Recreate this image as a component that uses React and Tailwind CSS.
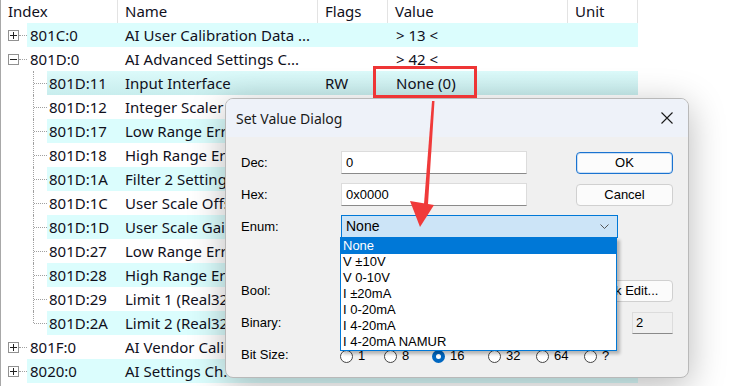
import React from 'react'

const rows = [
  { lvl: 0, sign: '+', idx: '801C:0', name: 'AI User Calibration Data ...', value: '> 13 <' },
  { lvl: 0, sign: '-', idx: '801D:0', name: 'AI Advanced Settings C...', value: '> 42 <' },
  { lvl: 1, idx: '801D:11', name: 'Input Interface', flags: 'RW', value: 'None (0)', sel: true },
  { lvl: 1, idx: '801D:12', name: 'Integer Scaler' },
  { lvl: 1, idx: '801D:17', name: 'Low Range Error' },
  { lvl: 1, idx: '801D:18', name: 'High Range Error' },
  { lvl: 1, idx: '801D:1A', name: 'Filter 2 Settings' },
  { lvl: 1, idx: '801D:1C', name: 'User Scale Offset' },
  { lvl: 1, idx: '801D:1D', name: 'User Scale Gain' },
  { lvl: 1, idx: '801D:27', name: 'Low Range Error' },
  { lvl: 1, idx: '801D:28', name: 'High Range Error' },
  { lvl: 1, idx: '801D:29', name: 'Limit 1 (Real32)' },
  { lvl: 1, idx: '801D:2A', name: 'Limit 2 (Real32)', last: true },
  { lvl: 0, sign: '+', idx: '801F:0', name: 'AI Vendor Calibration Data' },
  { lvl: 0, sign: '+', idx: '8020:0', name: 'AI Settings Ch. 1' },
]

const enumItems = ['None', 'V ±10V', 'V 0-10V', 'I ±20mA', 'I 0-20mA', 'I 4-20mA', 'I 4-20mA NAMUR']

const bitSizes = [
  { label: '1', w: 'w-[44px]' },
  { label: '8', w: 'w-[48px]' },
  { label: '16', w: 'w-[56px]', checked: true },
  { label: '32', w: 'w-[48px]' },
  { label: '64', w: 'w-[48px]' },
  { label: '?', w: 'w-[48px]' },
]

function ExpandBox({ sign }) {
  return (
    <div className="relative w-[11px] h-[11px] border border-[#919191] bg-white">
      <div className="absolute left-[1px] top-[4px] w-[7px] h-px bg-[#222]" />
      {sign === '+' && <div className="absolute left-[4px] top-[1px] w-px h-[7px] bg-[#222]" />}
    </div>
  )
}

function TreeGutter({ row }) {
  if (row.lvl === 0) {
    return (
      <div className="flex items-center w-[26px] h-full shrink-0 pl-[7px]">
        <ExpandBox sign={row.sign} />
        <div className="flex-1 border-t border-dotted border-[#a0a0a0]" />
      </div>
    )
  }
  return (
    <div className="relative w-[46px] h-full shrink-0">
      <div className={`absolute left-[32px] top-0 border-l border-dotted border-[#a0a0a0] ${row.last ? 'h-[12px]' : 'h-full'}`} />
      <div className="absolute left-[33px] top-[12px] w-[13px] border-t border-dotted border-[#a0a0a0]" />
    </div>
  )
}

function TreeRow({ row, i }) {
  const shaded = i % 2 === 0
  const bg = row.sel
    ? 'bg-gradient-to-b from-[#dcfafa] to-[#c8eded]'
    : shaded ? 'bg-[#dbfdfd]' : 'bg-white'
  return (
    <div className="flex h-[24px] leading-[24px] whitespace-nowrap">
      <TreeGutter row={row} />
      <div className={`flex ${row.lvl === 0 ? 'w-[611px]' : 'w-[591px]'} ${bg}`}>
        <div className={`${row.lvl === 0 ? 'w-[91px] pl-[3px]' : 'w-[71px] pl-[2px]'} overflow-hidden`}>{row.idx}</div>
        <div className="w-[200px] pl-[7px] overflow-hidden">{row.name}</div>
        <div className="w-[70px] pl-[7px]">{row.flags}</div>
        <div className="w-[180px] pl-[8px]">{row.value}</div>
        <div className="w-[70px]" />
      </div>
    </div>
  )
}

function Grid() {
  const cols = [
    { t: 'Index', w: 'w-[117px]' },
    { t: 'Name', w: 'w-[200px]' },
    { t: 'Flags', w: 'w-[70px]' },
    { t: 'Value', w: 'w-[180px]' },
    { t: 'Unit', w: 'w-[70px]' },
  ]
  return (
    <div className="h-full border-l border-[#a8a8a8] font-['Noto_Sans',sans-serif] text-[15px] text-[#10101c]">
      <div className="flex h-[23px] leading-[23px]">
        {cols.map((c) => (
          <div key={c.t} className={`${c.w} pl-[7px] border-r border-[#e3e3e3]`}>{c.t}</div>
        ))}
      </div>
      {rows.map((r, i) => (
        <TreeRow key={r.idx} row={r} i={i} />
      ))}
    </div>
  )
}

function Radio({ checked }) {
  if (checked) {
    return <div className="w-[13px] h-[13px] rounded-full border-[4px] border-[#0067c0] bg-white shrink-0" />
  }
  return <div className="w-[13px] h-[13px] rounded-full border border-[#444] bg-white shrink-0" />
}

function Dialog() {
  return (
    <div className="absolute left-[225px] top-[98px] w-[464px] h-[280px] rounded-[8px] border border-[#b9b9b9] bg-[#f0f0f0] overflow-hidden shadow-[0_8px_36px_rgba(0,0,0,0.28)]">
      <div className="flex items-center justify-between h-[38px] bg-[#eef2f9] pl-[10px] pr-[14px] font-['Noto_Sans',sans-serif] text-[14px] text-[#1a1a1a]">
        <span>Set Value Dialog</span>
        <svg width="12" height="12" viewBox="0 0 12 12" className="mr-[1px]">
          <path d="M0.5 0.5 L11.5 11.5 M11.5 0.5 L0.5 11.5" stroke="#1a1a1a" strokeWidth="1.1" />
        </svg>
      </div>
      <div className="flex flex-col gap-[9px] pt-[14px] pl-[15px] pr-[15px] font-['Liberation_Sans',Arial,sans-serif] text-[13px] text-black">
        <div className="flex items-center h-[23px]">
          <div className="w-[100px]">Dec:</div>
          <div className="w-[186px] h-[23px] bg-white border border-[#dcdcdc] border-b-[#8a8a8a] pl-[4px] leading-[21px]">0</div>
          <button className="ml-auto w-[97px] h-[22px] rounded-[4px] border border-[#1a73d0] bg-[#fcfcfc] ring-1 ring-inset ring-[#5b9be0]/30">OK</button>
        </div>
        <div className="flex items-center h-[23px]">
          <div className="w-[100px]">Hex:</div>
          <div className="w-[186px] h-[23px] bg-white border border-[#dcdcdc] border-b-[#8a8a8a] pl-[4px] leading-[21px]">0x0000</div>
          <button className="ml-auto w-[97px] h-[22px] rounded-[4px] border border-[#d0d0d0] bg-[#fbfbfb]">Cancel</button>
        </div>
        <div className="flex items-center h-[23px]">
          <div className="w-[100px]">Enum:</div>
          <div className="flex items-center justify-between w-[277px] h-[23px] bg-[#cce4f7] border border-[#0078d7] pl-[4px] pr-[8px] text-[14px]">
            <span>None</span>
            <svg width="9" height="5" viewBox="0 0 9 5">
              <path d="M0.5 0.5 L4.5 4.5 L8.5 0.5" fill="none" stroke="#555" strokeWidth="1" />
            </svg>
          </div>
        </div>
        <div className="h-[23px]" />
        <div className="flex items-center h-[23px]">
          <div className="w-[100px]">Bool:</div>
          <button className="ml-auto w-[97px] h-[22px] rounded-[4px] border border-[#d0d0d0] bg-[#fbfbfb]">Mask Edit...</button>
        </div>
        <div className="flex items-center h-[23px]">
          <div className="w-[100px]">Binary:</div>
          <div className="ml-auto w-[41px] h-[22px] bg-[#f0f0f0] border border-[#dcdcdc] border-b-[#8a8a8a] pl-[3px] leading-[20px]">2</div>
        </div>
        <div className="flex items-center h-[23px]">
          <div className="w-[99px]">Bit Size:</div>
          {bitSizes.map((b) => (
            <div key={b.label} className={`flex items-center gap-[5px] ${b.w} pt-[3px]`}>
              <Radio checked={b.checked} />
              <span>{b.label}</span>
            </div>
          ))}
        </div>
      </div>
      <div className="absolute left-[114px] top-[138px] w-[277px] bg-white border border-[#0078d7] font-['Liberation_Sans',Arial,sans-serif] text-[13px] text-black shadow-[3px_3px_3px_rgba(0,0,0,0.25)]">
        {enumItems.map((t, i) => (
          <div key={t} className={`h-[16px] leading-[16px] pl-[2px] ${i === 0 ? 'bg-[#0078d7] text-white' : ''}`}>{t}</div>
        ))}
      </div>
    </div>
  )
}

export default function App() {
  return (
    <div className="relative w-[729px] h-[386px] overflow-hidden bg-white">
      <Grid />
      <Dialog />
      {/* annotation: red box + arrow */}
      <div className="absolute left-[373px] top-[66px] w-[104px] h-[32px] border-[3px] border-[#ee3535]" />
      <svg className="absolute left-0 top-0 pointer-events-none" width="729" height="386" viewBox="0 0 729 386">
        <polygon points="432,101 434.5,101 428,204 424,204" fill="#f03a3a" />
        <polygon points="410,201 434,205 420,227" fill="#f03a3a" />
      </svg>
    </div>
  )
}
